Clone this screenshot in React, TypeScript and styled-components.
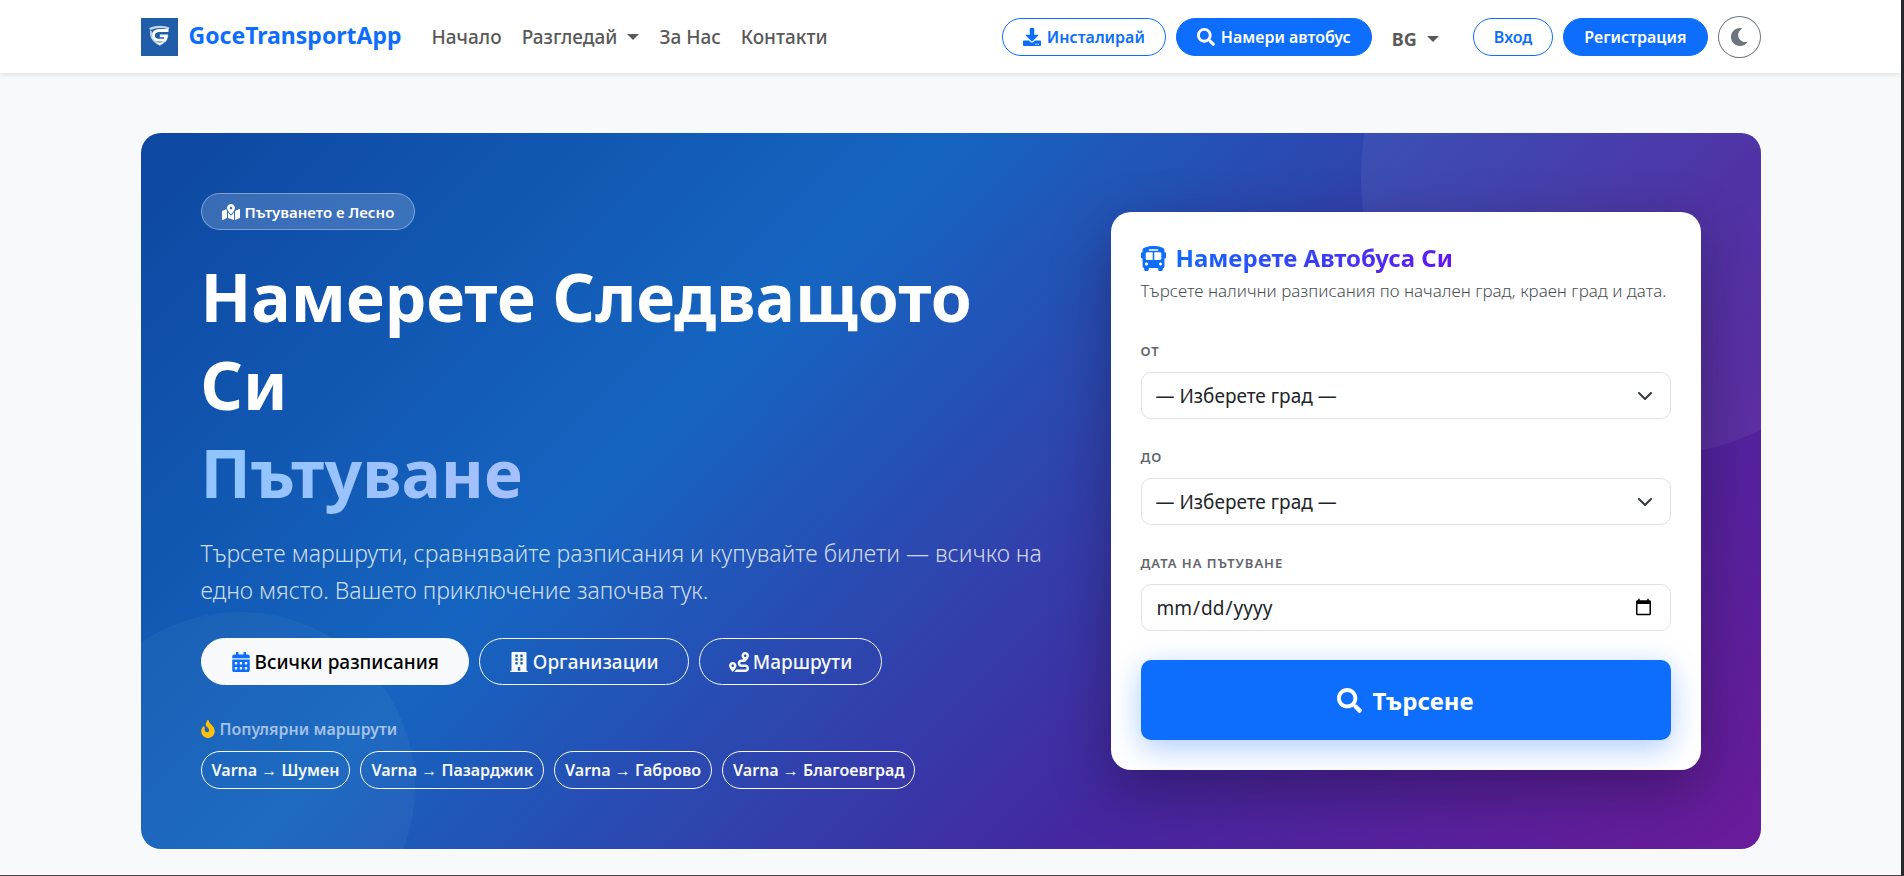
import React from 'react';
import styled, { createGlobalStyle, css } from 'styled-components';
import {
  FaBuilding,
  FaBusAlt,
  FaCalendarAlt,
  FaDownload,
  FaFire,
  FaMapMarkedAlt,
  FaMoon,
  FaRoute,
  FaSearch,
} from 'react-icons/fa';

const color = {
  primary: '#0d6efd',
  indigo: '#6610f2',
  page: '#f8f9fb',
  ink: '#212529',
  nav: '#595959',
  muted: '#5f656b',
  line: '#dee2e6',
  grey: '#6c757d',
  warning: '#ffc107',
};

const GlobalStyle = createGlobalStyle`
  *, *::before, *::after { box-sizing: border-box; }
  body {
    margin: 0;
    background: ${color.page};
    color: ${color.ink};
    font-family: "Noto Sans", "Open Sans", sans-serif;
    font-size: 16px;
  }
  button, input, select { font-family: inherit; }
  h1, h2, p { margin: 0; }
`;

const Page = styled.div`
  min-height: 100vh;
  border-right: 3px solid #26282b;
  border-bottom: 1px solid #4d4148;
`;

const Container = styled.div`
  width: min(1620px, 100% - 40px);
  margin: 0 auto;
`;

const Header = styled.header`
  background: #fff;
  box-shadow: 0 2px 5px rgba(0, 0, 0, 0.1);
`;

const Bar = styled(Container)`
  display: flex;
  flex-wrap: wrap;
  align-items: center;
  min-height: 73px;
`;

const Brand = styled.a`
  display: flex;
  align-items: center;
  gap: 11px;
  margin-right: 20px;
  color: ${color.primary};
  font-size: 23px;
  font-weight: 700;
  line-height: 38px;
  text-decoration: none;

  svg {
    width: 37px;
    height: 38px;
  }

  span {
    padding-bottom: 3px;
    line-height: 35px;
  }
`;

const NavList = styled.nav`
  display: flex;
  align-items: center;
`;

const navItem = css`
  display: flex;
  align-items: center;
  padding: 0 10px;
  border: 0;
  background: none;
  color: ${color.nav};
  font-size: 19px;
  font-weight: 500;
  line-height: 28px;
  text-decoration: none;
  white-space: nowrap;
  cursor: pointer;
`;

const NavLink = styled.a`
  ${navItem}
`;

const NavMenu = styled.button`
  ${navItem}
  gap: 10px;

  &::after {
    content: '';
    border: 6px solid transparent;
    border-top-color: currentColor;
    border-bottom: 0;
  }
`;

const LanguageMenu = styled(NavMenu)`
  margin-right: 14px;
  padding-top: 5px;
  font-size: 18px;
  font-weight: 700;
`;

const Actions = styled.div`
  display: flex;
  flex-wrap: wrap;
  align-items: center;
  gap: 10px;
  margin-left: auto;
`;

const PillButton = styled.button<{ $filled?: boolean }>`
  display: flex;
  align-items: center;
  gap: 6px;
  height: 38px;
  padding: 0 20px;
  border: 1px solid ${color.primary};
  border-radius: 19px;
  background: ${(p) => (p.$filled ? color.primary : 'transparent')};
  color: ${(p) => (p.$filled ? '#fff' : color.primary)};
  font-size: 16px;
  font-weight: 600;
  white-space: nowrap;
  cursor: pointer;

  svg {
    width: 18px;
    height: 18px;
  }
`;

const ThemeButton = styled.button`
  display: grid;
  place-items: center;
  width: 43px;
  height: 42px;
  padding: 0;
  border: 1px solid ${color.grey};
  border-radius: 50%;
  background: none;
  color: ${color.grey};
  font-size: 18px;
  cursor: pointer;
`;

const Hero = styled(Container).attrs({ as: 'section' })`
  position: relative;
  display: grid;
  grid-template-columns: minmax(0, 85fr) minmax(0, 59fr);
  align-items: center;
  gap: 60px;
  margin-top: 60px;
  padding: 60px;
  overflow: hidden;
  border-radius: 20px;
  background: linear-gradient(135deg, #0d47a1 0%, #1565c0 35%, #4527a0 70%, #6a1b9a 100%);

  &::before,
  &::after {
    content: '';
    position: absolute;
    border-radius: 50%;
  }

  &::before {
    top: -236px;
    right: -160px;
    width: 560px;
    height: 560px;
    background: rgba(255, 255, 255, 0.06);
  }

  &::after {
    bottom: -113px;
    left: -76px;
    width: 350px;
    height: 350px;
    background: rgba(255, 255, 255, 0.04);
  }

  > * {
    position: relative;
    z-index: 1;
  }

  @media (max-width: 1100px) {
    grid-template-columns: minmax(0, 1fr);
    padding: 40px 20px;
  }
`;

const Intro = styled.div`
  display: flex;
  flex-direction: column;
  align-items: flex-start;
`;

const Badge = styled.span`
  display: flex;
  align-items: center;
  gap: 5px;
  height: 37px;
  padding: 0 20px;
  border: 1px solid rgba(255, 255, 255, 0.35);
  border-radius: 19px;
  background: rgba(255, 255, 255, 0.18);
  color: #fff;
  font-size: 15px;
  font-weight: 600;

  svg {
    width: 18px;
    height: 16px;
  }
`;

const Headline = styled.h1`
  margin-top: 22px;
  color: #fff;
  font-size: 66px;
  font-weight: 700;
  line-height: 88px;

  @media (max-width: 700px) {
    font-size: 40px;
    line-height: 52px;
  }
`;

const HeadlineAccent = styled.span`
  display: block;
  background: linear-gradient(90deg, #90c5ff, #c9b6ff);
  background-clip: text;
  -webkit-background-clip: text;
  color: transparent;
`;

const Lead = styled.p`
  margin-top: 19px;
  color: rgba(255, 255, 255, 0.8);
  font-size: 23px;
  font-weight: 300;
  line-height: 37px;
`;

const ButtonRow = styled.div<{ $top: number }>`
  display: flex;
  flex-wrap: wrap;
  gap: 10px;
  margin-top: ${(p) => p.$top}px;
`;

const HeroLink = styled.a<{ $filled?: boolean }>`
  display: flex;
  align-items: center;
  gap: 4px;
  height: 47px;
  padding: 0 29px;
  border: 1px solid ${color.page};
  border-radius: 24px;
  background: ${(p) => (p.$filled ? color.page : 'transparent')};
  color: ${(p) => (p.$filled ? '#000' : color.page)};
  font-size: 19px;
  font-weight: 500;
  text-decoration: none;
  white-space: nowrap;

  svg {
    height: 20px;
    width: auto;
    color: ${(p) => (p.$filled ? color.primary : 'inherit')};
  }
`;

const PopularTitle = styled.p`
  display: flex;
  align-items: center;
  gap: 5px;
  margin-top: 32px;
  color: rgba(255, 255, 255, 0.6);
  font-size: 16px;
  font-weight: 600;
  line-height: 24px;

  svg {
    width: 14px;
    height: 18px;
    color: ${color.warning};
  }
`;

const RouteLink = styled.a`
  display: flex;
  align-items: center;
  height: 38px;
  padding: 0 10px;
  border: 1px solid ${color.page};
  border-radius: 19px;
  color: ${color.page};
  font-size: 16px;
  font-weight: 600;
  text-decoration: none;
  white-space: nowrap;
`;

const SearchCard = styled.form`
  display: flex;
  flex-direction: column;
  padding: 30px;
  border-radius: 20px;
  background: #fff;
  box-shadow: 0 20px 60px rgba(0, 0, 0, 0.3);
`;

const CardTitle = styled.h2`
  display: flex;
  align-items: center;
  gap: 10px;
  color: ${color.primary};
  font-size: 24px;
  font-weight: 700;
  line-height: 32px;

  svg {
    width: 25px;
    height: 25px;
  }

  span {
    background: linear-gradient(135deg, ${color.primary}, ${color.indigo});
    background-clip: text;
    -webkit-background-clip: text;
    color: transparent;
  }
`;

const CardText = styled.p`
  margin: 4px 0 38px;
  color: #4a4f54;
  font-size: 17px;
  font-weight: 300;
  line-height: 25px;
`;

const Fields = styled.div`
  display: flex;
  flex-direction: column;
  gap: 28px;
`;

const Field = styled.div`
  display: flex;
  flex-direction: column;
  gap: 11px;
`;

const Label = styled.label`
  color: ${color.muted};
  font-size: 13px;
  font-weight: 600;
  letter-spacing: 1px;
  line-height: 20px;
  text-transform: uppercase;
`;

const control = css`
  width: 100%;
  height: 47px;
  padding: 0 15px 0 14px;
  border: 1px solid ${color.line};
  border-radius: 10px;
  background: #fff;
  color: ${color.ink};
  font-size: 19px;
`;

const SelectBox = styled.div`
  display: grid;
  align-items: center;

  > * {
    grid-area: 1 / 1;
  }

  svg {
    justify-self: end;
    margin-right: 18px;
    pointer-events: none;
  }
`;

const Select = styled.select`
  ${control}
  appearance: none;
`;

const DateInput = styled.input`
  ${control}
`;

const SubmitButton = styled.button`
  display: flex;
  align-items: center;
  justify-content: center;
  gap: 10px;
  height: 80px;
  margin-top: 29px;
  border: 0;
  border-radius: 10px;
  background: ${color.primary};
  box-shadow: 0 8px 30px rgba(13, 110, 253, 0.35);
  color: #fff;
  font-size: 24px;
  font-weight: 700;
  cursor: pointer;

  svg {
    width: 25px;
    height: 25px;
  }
`;

const Logo = () => (
  <svg viewBox="0 0 37 38" aria-hidden="true">
    <rect width="37" height="38" fill="#205da9" />
    <path d="M8 10Q18.500 6 28.500 9.500L27.500 11.500Q18 8.500 9.500 12z" fill="#c3d6ec" />
    <path d="M9 12.500c-.4 6 .8 10.500 9.800 15.300 6.200-3.300 8-6.600 8.600-10.300l-2 .2c-.6 3-2.400 5-6.600 7.600-5.800-3.300-7.800-6-8-12.300z" fill="#b4cbe6" />
    <path
      d="M27.500 12.500H18.500c-4 0-6 2.200-6 5s2.200 4.600 5.500 4.600h6l1.200-4.300h-6.400"
      fill="none"
      stroke="#fff"
      strokeWidth="2.800"
    />
    <path d="M15 24.500h8l-4.200 2.600z" fill="#fff" />
  </svg>
);

const Chevron = () => (
  <svg width="16" height="16" viewBox="0 0 16 16" aria-hidden="true">
    <path
      d="m2 5 6 6 6-6"
      fill="none"
      stroke="#343a40"
      strokeWidth="2"
      strokeLinecap="round"
      strokeLinejoin="round"
    />
  </svg>
);

const popularRoutes = ['Шумен', 'Пазарджик', 'Габрово', 'Благоевград'];

const CityField = ({ id, label }: { id: string; label: string }) => (
  <Field>
    <Label htmlFor={id}>{label}</Label>
    <SelectBox>
      <Select id={id} defaultValue="">
        <option value="">— Изберете град —</option>
      </Select>
      <Chevron />
    </SelectBox>
  </Field>
);

export default function App() {
  return (
    <Page>
      <GlobalStyle />
      <Header>
        <Bar>
          <Brand href="#">
            <Logo />
            <span>GoceTransportApp</span>
          </Brand>
          <NavList>
            <NavLink href="#">Начало</NavLink>
            <NavMenu type="button">Разгледай</NavMenu>
            <NavLink href="#">За Нас</NavLink>
            <NavLink href="#">Контакти</NavLink>
          </NavList>
          <Actions>
            <PillButton type="button">
              <FaDownload />
              Инсталирай
            </PillButton>
            <PillButton type="button" $filled>
              <FaSearch />
              Намери автобус
            </PillButton>
            <LanguageMenu type="button">BG</LanguageMenu>
            <PillButton type="button">Вход</PillButton>
            <PillButton type="button" $filled>
              Регистрация
            </PillButton>
            <ThemeButton type="button" aria-label="Тъмна тема">
              <FaMoon />
            </ThemeButton>
          </Actions>
        </Bar>
      </Header>

      <Hero>
        <Intro>
          <Badge>
            <FaMapMarkedAlt />
            Пътуването е Лесно
          </Badge>
          <Headline>
            Намерете Следващото Си
            <HeadlineAccent>Пътуване</HeadlineAccent>
          </Headline>
          <Lead>
            Търсете маршрути, сравнявайте разписания и купувайте билети — всичко на едно място.
            Вашето приключение започва тук.
          </Lead>
          <ButtonRow $top={29}>
            <HeroLink href="#" $filled>
              <FaCalendarAlt />
              Всички разписания
            </HeroLink>
            <HeroLink href="#">
              <FaBuilding />
              Организации
            </HeroLink>
            <HeroLink href="#">
              <FaRoute />
              Маршрути
            </HeroLink>
          </ButtonRow>
          <PopularTitle>
            <FaFire />
            Популярни маршрути
          </PopularTitle>
          <ButtonRow $top={10}>
            {popularRoutes.map((city) => (
              <RouteLink key={city} href="#">{`Varna → ${city}`}</RouteLink>
            ))}
          </ButtonRow>
        </Intro>

        <SearchCard>
          <CardTitle>
            <FaBusAlt />
            <span>Намерете Автобуса Си</span>
          </CardTitle>
          <CardText>Търсете налични разписания по начален град, краен град и дата.</CardText>
          <Fields>
            <CityField id="from" label="От" />
            <CityField id="to" label="До" />
            <Field>
              <Label htmlFor="date">Дата на пътуване</Label>
              <DateInput id="date" type="date" />
            </Field>
          </Fields>
          <SubmitButton type="submit">
            <FaSearch />
            Търсене
          </SubmitButton>
        </SearchCard>
      </Hero>
    </Page>
  );
}
